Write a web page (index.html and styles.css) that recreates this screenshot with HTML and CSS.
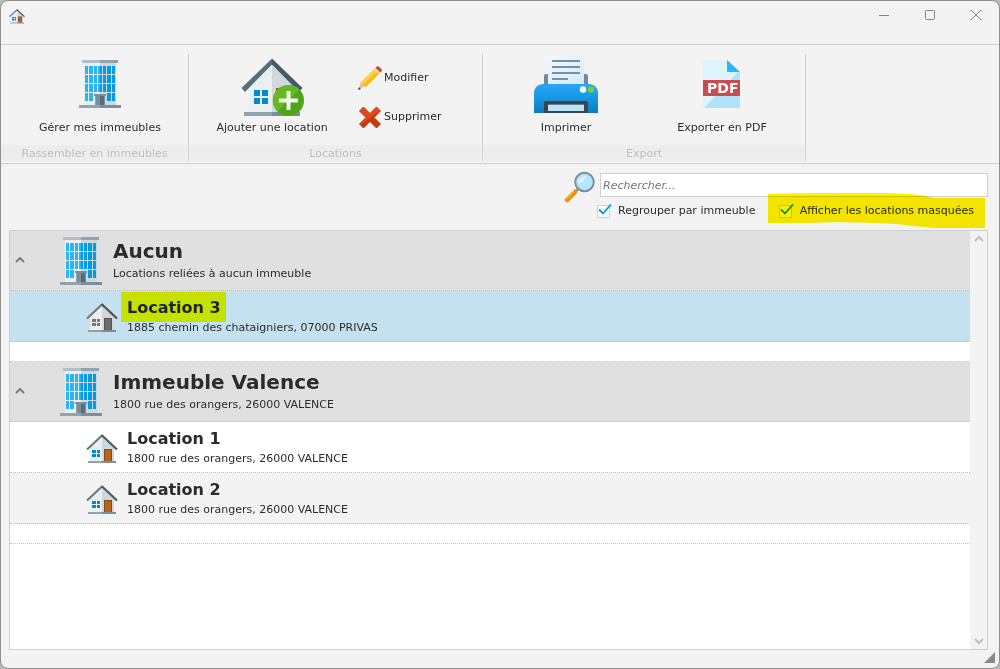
FILE: index.html
```html
<!DOCTYPE html>
<html lang="fr">
<head>
<meta charset="utf-8">
<title>Locations</title>
<link rel="stylesheet" href="styles.css">
</head>
<body>
<svg class="defs" aria-hidden="true">
  <defs>
    <symbol id="building" viewBox="0 0 42 48">
      <path fill="#eceff1" d="M5 3h16v42H5z"/><path fill="#cfd8dc" d="M21 3h16v42H21z"/>
      <path fill="#b0bec5" d="M3 0h18v3H3z"/><path fill="#90a4ae" d="M21 0h18v3H21z"/>
      <path fill="#29b6f6" d="M6 6h3v8H6zm4 0h4v8h-4zm5 0h3v8h-3zm4 0h2v8h-2zM6 15h3v8H6zm4 0h4v8h-4zm5 0h3v8h-3zm4 0h2v8h-2zM6 24h3v8H6zm4 0h4v8h-4zm5 0h3v8h-3zm4 0h2v8h-2zM6 33h3v8H6zm4 0h4v8h-4z"/>
      <path fill="#039be5" d="M21 6h2v8h-2zm3 0h3v8h-3zm4 0h4v8h-4zm5 0h3v8h-3zM21 15h2v8h-2zm3 0h3v8h-3zm4 0h4v8h-4zm5 0h3v8h-3zM21 24h2v8h-2zm3 0h3v8h-3zm4 0h4v8h-4zm5 0h3v8h-3zM28 33h4v8h-4zm5 0h3v8h-3z"/>
      <path fill="#90a4ae" d="M16 36h5v9h-5z"/><path fill="#78909c" d="M15 34h12v2H15zm6 2h5v9h-5z"/><path fill="#546e7a" d="M17 36h8v9h-8z"/><path fill="#78909c" d="M17 36h4v9h-4z"/>
      <path fill="#90a4ae" d="M0 45h21v3H0z"/><path fill="#78909c" d="M21 45h21v3H21z"/>
    </symbol>
    <symbol id="house" viewBox="0 0 32 30">
      <path fill="#eceff1" d="M16 3 4 14v13h12z"/><path fill="#cfd8dc" d="M16 3l12 11v13H16z"/>
      <path fill="#0288d1" d="M6 16h4v3H6zm5 0h3v3h-3zM6 20h4v3H6zm5 0h3v3h-3z"/>
      <path fill="#8a4b12" d="M18 15h8v12h-8z"/><path fill="#b5651d" d="M19 16h6v11h-6z"/>
      <path fill="#90a4ae" d="M2 27h14v2H2z"/><path fill="#78909c" d="M16 27h14v2H16z"/>
      <path fill="none" stroke="#607d8b" stroke-width="2.200" d="M1 15.500 16 1.500"/><path fill="none" stroke="#455a64" stroke-width="2.200" d="M15.500 1 31 15.500"/>
    </symbol>
    <symbol id="house-grey" viewBox="0 0 32 30">
      <path fill="#eee" d="M16 3 4 14v13h12z"/><path fill="#d6d6d6" d="M16 3l12 11v13H16z"/>
      <path fill="#777" d="M6 16h4v3H6zm5 0h3v3h-3zM6 20h4v3H6zm5 0h3v3h-3z"/>
      <path fill="#555" d="M18 15h8v12h-8z"/><path fill="#6b6b6b" d="M19 16h6v11h-6z"/>
      <path fill="#9d9d9d" d="M2 27h14v2H2z"/><path fill="#888" d="M16 27h14v2H16z"/>
      <path fill="none" stroke="#777" stroke-width="2.200" d="M1 15.500 16 1.500"/><path fill="none" stroke="#4f4f4f" stroke-width="2.200" d="M15.500 1 31 15.500"/>
    </symbol>
    <symbol id="tick" viewBox="0 0 16 14"><path fill="none" stroke="currentColor" stroke-width="1.800" d="M2 5.500l4 4 8-9"/></symbol>
    <linearGradient id="printer-blue" x2="0" y2="1"><stop stop-color="#2ca6f4"/><stop offset=".4" stop-color="#189be8"/><stop offset="1" stop-color="#0f79be"/></linearGradient>
    <linearGradient id="paper" x2="1" y2="1"><stop stop-color="#eff9ff"/><stop offset="1" stop-color="#cfeafa"/></linearGradient>
  </defs>
</svg>

<div class="window">
  <header class="titlebar">
    <svg class="app-icon"><use href="#house"/></svg>
    <div class="window-buttons">
      <button type="button" aria-label="Réduire"><svg viewBox="0 0 12 12"><path d="M1 6.500h10"/></svg></button>
      <button type="button" aria-label="Agrandir"><svg viewBox="0 0 12 12"><rect x="1.500" y="1.500" width="9" height="9" rx="1"/></svg></button>
      <button type="button" aria-label="Fermer"><svg viewBox="0 0 12 12"><path d="M1 1l10 10M11 1 1 11"/></svg></button>
    </div>
  </header>

  <nav class="ribbon">
    <section class="group group-buildings">
      <div class="tools">
        <button type="button" class="tool"><svg class="icon-building"><use href="#building"/></svg><span>Gérer mes immeubles</span></button>
      </div>
      <h2>Rassembler en immeubles</h2>
    </section>
    <section class="group group-rentals">
      <div class="tools">
        <button type="button" class="tool">
          <svg class="icon-large" viewBox="0 0 64 60">
            <path fill="#eceff1" d="M32 8 8 31v25h24z"/><path fill="#cfd8dc" d="M32 8l24 23v25H32z"/>
            <path fill="#0288d1" d="M14 34h6v6h-6zm8 0h6v6h-6zm-8 8h6v6h-6zm8 0h6v6h-6z"/>
            <path fill="#ab4f16" d="M36 32h15v22H36z"/>
            <path fill="#90a4ae" d="M4 56h28v4H4z"/><path fill="#78909c" d="M32 56h28v4H32z"/>
            <path fill="#546e7a" d="M32 2.500v6L5 36l-3.500-4z"/><path fill="#455a64" d="M32 2.500v6L59 36l3.500-4z"/>
            <circle cx="48.500" cy="44.500" r="15.500" fill="#4ea51a"/><path fill="#65b922" d="M37.500 55.500a15.500 15.500 0 0 1 22-22z"/>
            <path fill="#f5f7f3" d="M46.500 35h4v7.500H58v4h-7.500V54h-4v-7.500H39v-4h7.500z"/>
          </svg>
          <span>Ajouter une location</span>
        </button>
        <div class="tool-stack">
          <button type="button" class="tool-inline">
            <svg viewBox="0 0 24 24"><path fill="#e9c28b" d="M1 23l2-8 5 5z"/><path fill="#424242" d="M0 24l1-3 2 2z"/><path fill="#ffd43b" d="M3 16 16 3l2.500 2.500L5 18z"/><path fill="#f5bd16" d="m5 18 13.500-12.500L21 8 8 21z"/><path fill="#cfd8dc" d="m16 3 2-2 5 5-2 2z"/><path fill="#d3421d" d="m17.500 1.500 1.500-1q1-.8 2 .2l2.500 2.500q.8 1 0 2l-1 1.300z"/></svg>
            <span>Modifier</span>
          </button>
          <button type="button" class="tool-inline">
            <svg viewBox="0 0 24 24"><path fill="#dd4a1b" stroke="#b83a17" d="m5.500 2 6.500 6.500L18.500 2 22.500 6 16 12.500 22.500 19l-4 4L12 16.500 5.500 23l-4-4L8 12.500 1.500 6z"/><path fill="#c23a10" d="m12 12.500 10-7L16 12.500l6 6.500-3.500 3.500L12 16l-6.500 6.500L3 20z"/></svg>
            <span>Supprimer</span>
          </button>
        </div>
      </div>
      <h2>Locations</h2>
    </section>
    <section class="group group-export">
      <div class="tools">
        <button type="button" class="tool">
          <svg class="icon-large" viewBox="0 2 64 60">
            <path fill="#78879a" d="M12 20h40q2 0 2 2v10H10V22q0-2 2-2z"/>
            <path fill="url(#paper)" d="M14 2h36v30H14z"/>
            <path stroke="#7d8da1" stroke-width="2" d="M18 7h28M18 13h28M18 19h28M18 25h16"/>
            <path fill="url(#printer-blue)" d="M8 30h48q8 2 8 9v20H0V39q0-7 8-9z"/>
            <path fill="#3a444d" d="M12 47h40q2 0 2 2v10H10V49q0-2 2-2z"/><path fill="#bbe3fa" d="M14 51h36v6H14z"/><path fill="#607d8b" d="M14 50h36v1H14z"/>
            <circle cx="49" cy="35.500" r="3.200" fill="#fff"/><circle cx="57" cy="35.500" r="3.200" fill="#76d12c"/>
          </svg>
          <span>Imprimer</span>
        </button>
        <button type="button" class="tool">
          <svg class="icon-pdf" viewBox="0 0 38 48">
            <path fill="#def3fd" d="M0 0h24l13 12v36H0z"/><path fill="#b0e2fa" d="M37 12v36H1L35 12z"/><path fill="#29b6f6" d="M24 0v12h13z"/>
            <path fill="#cc4b4c" d="M0 20h37v16H0z"/><text x="4" y="33">PDF</text>
          </svg>
          <span>Exporter en PDF</span>
        </button>
      </div>
      <h2>Export</h2>
    </section>
  </nav>

  <main>
    <form class="filters">
      <svg class="magnifier" viewBox="0 0 32 32">
        <path stroke="#90a4ae" stroke-width="3" d="m10 22 4-4"/><path stroke="#fb8c00" stroke-width="4.500" stroke-linecap="round" d="m3 29 8-8"/><path stroke="#ffb13b" stroke-width="1.500" d="m2 28 8-8"/>
        <circle cx="20.500" cy="11" r="9.300" fill="#b3e5fc" stroke="#78909c" stroke-width="2"/><path fill="#def5ff" d="M14 13q0-8 8-8-1 6-8 8z"/>
      </svg>
      <div class="fields">
        <input class="search" type="text" placeholder="Rechercher..." aria-label="Rechercher">
        <div class="options">
          <label class="option"><input type="checkbox" checked><svg class="tick"><use href="#tick"/></svg>Regrouper par immeuble</label>
          <label class="option"><input type="checkbox" checked><svg class="tick"><use href="#tick"/></svg>Afficher les locations masquées
            <svg class="highlight" viewBox="0 0 217 36" preserveAspectRatio="none"><path d="M0 1Q30 0 55 0q55-1 87 1 15 1 24 4 27 0 51 0v30h-50q-24-2-39-4-50-3-87-1l-41 0z"/></svg>
          </label>
        </div>
      </div>
    </form>

    <div class="list">
      <div class="rows">
        <section>
          <header class="building">
            <button type="button" class="fold" aria-label="Replier Aucun"><svg viewBox="0 0 10 7"><path d="m1 5 4-4 4 4"/></svg></button>
            <svg class="icon-building"><use href="#building"/></svg>
            <div><h3>Aucun</h3><p>Locations reliées à aucun immeuble</p></div>
          </header>
          <article class="rental selected">
            <svg class="icon-house"><use href="#house-grey"/></svg>
            <div><h4><mark>Location 3</mark></h4><p>1885 chemin des chataigniers, 07000 PRIVAS</p></div>
          </article>
          <div class="spacer"></div>
        </section>
        <section>
          <header class="building">
            <button type="button" class="fold" aria-label="Replier Immeuble Valence"><svg viewBox="0 0 10 7"><path d="m1 5 4-4 4 4"/></svg></button>
            <svg class="icon-building"><use href="#building"/></svg>
            <div><h3>Immeuble Valence</h3><p>1800 rue des orangers, 26000 VALENCE</p></div>
          </header>
          <article class="rental">
            <svg class="icon-house"><use href="#house"/></svg>
            <div><h4>Location 1</h4><p>1800 rue des orangers, 26000 VALENCE</p></div>
          </article>
          <article class="rental alternate">
            <svg class="icon-house"><use href="#house"/></svg>
            <div><h4>Location 2</h4><p>1800 rue des orangers, 26000 VALENCE</p></div>
          </article>
          <div class="spacer"></div>
        </section>
      </div>
      <div class="scrollbar">
        <button type="button" aria-label="Défiler vers le haut"><svg viewBox="0 0 10 7"><path d="m1 5 4-4 4 4"/></svg></button>
        <button type="button" aria-label="Défiler vers le bas"><svg viewBox="0 0 10 7"><path d="m1 1 4 4 4-4"/></svg></button>
      </div>
    </div>
  </main>
  <div class="grip"></div>
</div>
</body>
</html>
```
FILE: styles.css
```css
* { box-sizing: border-box; }
body {
  margin: 0;
  background: #b9b9b9;
  color: #2b2b2b;
  font: 11px/14px Verdana, "DejaVu Sans", sans-serif;
}
h2, h3, h4, p { margin: 0; }
button { padding: 0; border: 0; background: none; color: inherit; font: inherit; }
svg { display: block; flex: none; }
.defs { position: absolute; width: 0; height: 0; }

.window {
  position: relative;
  display: flex;
  flex-direction: column;
  height: 100vh;
  overflow: hidden;
  border: 1px solid #8e8e8e;
  border-radius: 8px;
  background: #f3f3f3;
}

.titlebar {
  display: flex;
  justify-content: space-between;
  height: 44px;
  border-bottom: 1px solid #cfd0d3;
  padding: 0 0 14px 8px;
}
.app-icon { width: 16px; height: 15px; margin-top: 8px; }
.window-buttons { display: flex; }
.window-buttons button { display: grid; place-items: center; width: 46px; height: 28px; }
.window-buttons svg { width: 12px; height: 12px; fill: none; stroke: #858585; }

.ribbon {
  display: flex;
  height: 119px;
  padding: 9px 0 2px;
  border-bottom: 1px solid #cfd0d3;
}
.group {
  display: flex;
  flex-direction: column;
  justify-content: space-between;
  padding: 0 1px;
  border-right: 1px solid #cccdd0;
}
.group-buildings { width: 188px; }
.group-rentals { width: 294px; }
.group-export { width: 323px; }
.group h2 {
  height: 16px;
  background: #ededed;
  color: #bdbdbd;
  font-size: 11px;
  font-weight: normal;
  line-height: 18px;
  text-align: center;
}
.tools { display: flex; height: 81px; padding: 2px 0 0 4px; }
.group-buildings .tools { padding-left: 20px; }
.tool {
  display: flex;
  flex-direction: column;
  align-items: center;
  justify-content: space-between;
  width: 156px;
  white-space: nowrap;
}
.tool .icon-building { margin-top: 4px; }
.icon-building { width: 42px; height: 48px; }
.icon-large { width: 64px; height: 60px; }
.icon-pdf { width: 38px; height: 48px; margin-top: 4px; }
.icon-pdf text { font: bold 14px "DejaVu Sans", sans-serif; fill: #fff; }
.tool-stack { display: flex; flex-direction: column; gap: 15px; padding: 10px 0 0 8px; }
.tool-inline { display: flex; align-items: center; gap: 2px; height: 24px; }
.tool-inline svg { width: 24px; height: 24px; }

main {
  display: flex;
  flex: 1;
  flex-direction: column;
  min-height: 0;
  padding: 7px 11px 18px 8px;
}
.filters { display: flex; justify-content: flex-end; gap: 4px; height: 59px; }
.magnifier { width: 32px; height: 32px; }
.fields { width: 388px; padding-top: 2px; }
.search {
  display: block;
  width: 100%;
  height: 24px;
  padding: 0 2px;
  border: 1px solid #cfd0d3;
  background: #fff;
  font: inherit;
  outline: 0;
}
.search::placeholder { color: #757575; font-style: italic; opacity: 1; }
.options { display: flex; justify-content: space-between; padding-right: 14px; margin: 7px 0 0 -3px; }
.option { position: relative; display: flex; align-items: center; gap: 8px; white-space: nowrap; }
.option input {
  flex: none;
  width: 13px;
  height: 13px;
  margin: 0;
  border: 1px solid #cfd0d3;
  background: #fff;
  appearance: none;
}
.tick { position: absolute; left: 0; top: 0; width: 16px; height: 14px; color: #0d9ae0; }
.highlight {
  position: absolute;
  left: -11px;
  top: -11px;
  width: 217px;
  height: 36px;
  fill: #fff000;
  mix-blend-mode: multiply;
}

.list { display: flex; flex: 1; min-height: 0; border: 1px solid #cfcfcf; background: #fff; }
.rows { flex: 1; overflow: hidden; }
.building {
  display: flex;
  align-items: center;
  height: 60px;
  border-bottom: 1px dotted #bfbfbf;
  background: #e0e0e0;
}
.fold { display: grid; place-items: center; width: 20px; height: 22px; }
.fold svg, .scrollbar svg { width: 10px; height: 7px; fill: none; stroke: #7c7c7c; stroke-width: 2; }
.building .icon-building { margin: 0 11px 0 30px; }
.building h3 { font-size: 20px; line-height: 22px; }
.building p { margin-top: 5px; }
.rental {
  display: flex;
  height: 51px;
  padding: 9px 0 0 76px;
  border-bottom: 1px dotted #bfbfbf;
}
.icon-house { width: 32px; height: 30px; margin-top: 3px; }
.rental div { margin-left: 9px; }
.rental h4 { font-size: 16px; line-height: 16px; }
.rental p { margin-top: 5px; }
.rental mark { margin-left: -6px; padding: 6px 5px 5px 6px; background: #ffff00; color: inherit; mix-blend-mode: multiply; }
.selected { background: #c4e1ef; }
.alternate { background: #f3f3f3; }
.spacer { height: 20px; border-bottom: 1px dotted #bfbfbf; }
.scrollbar {
  display: flex;
  flex-direction: column;
  justify-content: space-between;
  width: 17px;
  background: #f3f3f3;
}
.scrollbar button { display: grid; place-items: center; height: 16px; }
.scrollbar svg { stroke: #bdbdbd; }

.grip {
  position: absolute;
  right: 4px;
  bottom: 5px;
  width: 11px;
  height: 11px;
  background: #8a8a8a;
  clip-path: polygon(100% 0, 100% 100%, 0 100%);
}
```
